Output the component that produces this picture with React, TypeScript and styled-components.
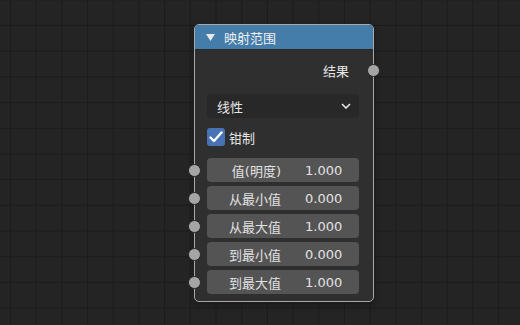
import React from "react";
import styled, { createGlobalStyle } from "styled-components";

const GlobalStyle = createGlobalStyle`
    html, body {
        margin: 0;
        padding: 0;
        background: #232323;
    }
    * {
        box-sizing: border-box;
    }
`

const Canvas = styled.div`
    position: relative;
    width: 520px;
    height: 325px;
    overflow: hidden;
    background-color: #242424;
    background-image:
        linear-gradient(to right, #1b1b1b 1px, transparent 1px),
        linear-gradient(to bottom, #1b1b1b 1px, transparent 1px);
    background-size: 25.7px 25.7px;
    background-position: 10px -0.7px;
    font-family: "DejaVu Sans", "Noto Sans CJK SC", sans-serif;
    font-size: 13px;
    color: #e6e6e6;
`

const Node = styled.div`
    position: absolute;
    left: 194px;
    top: 24px;
    width: 180px;
    border: 1px solid #a9a9a9;
    border-radius: 5px;
    background: rgba(48, 48, 48, 0.96);
    box-shadow: 0 2px 6px rgba(0, 0, 0, 0.35);
`

const Header = styled.div`
    height: 25px;
    display: flex;
    align-items: center;
    gap: 9px;
    padding-left: 11px;
    background: #447caa;
    border-radius: 4px 4px 0 0;
    border-bottom: 1px solid #262626;
    color: #f0f0f0;
`

const Body = styled.div`
    display: flex;
    flex-direction: column;
    padding: 8px 14px 7px 12px;
`

const Row = styled.div`
    position: relative;
    height: 24px;
    display: flex;
    align-items: center;
`

const OutputRow = styled(Row)`
    justify-content: flex-end;
    padding-right: 10px;
    margin-bottom: 12px;
`

const Dropdown = styled.div`
    height: 24px;
    display: flex;
    align-items: center;
    justify-content: space-between;
    padding: 0 8px 0 10px;
    background: #282828;
    border-radius: 4px;
    margin-bottom: 10px;
`

const CheckRow = styled.div`
    height: 18px;
    display: flex;
    align-items: center;
    gap: 4px;
    margin-bottom: 12px;
`

const CheckBox = styled.div`
    width: 18px;
    height: 18px;
    border-radius: 3px;
    background: #4772b3;
    display: flex;
    align-items: center;
    justify-content: center;
`

const Fields = styled.div`
    display: flex;
    flex-direction: column;
    gap: 4px;
`

const Field = styled.div`
    flex: 1;
    height: 24px;
    display: flex;
    align-items: center;
    background: #545454;
    border-radius: 4px;
    color: #e2e2e2;
`

const FieldLabel = styled.span`
    width: 74px;
    text-align: right;
`

const FieldValue = styled.span`
    margin-left: 24px;
`

const Socket = styled.span<{ $side: "left" | "right" }>`
    position: absolute;
    top: 50%;
    ${({ $side }) => ($side === "left" ? "left: -19px;" : "right: -21px;")}
    width: 13px;
    height: 13px;
    margin-top: -6.5px;
    border-radius: 50%;
    background: #a5a5a5;
    border: 1px solid #262626;
`

const inputs = [
    { label: "值(明度)", value: "1.000" },
    { label: "从最小值", value: "0.000" },
    { label: "从最大值", value: "1.000" },
    { label: "到最小值", value: "0.000" },
    { label: "到最大值", value: "1.000" },
]

const App = (): JSX.Element => {
    return (
        <>
            <GlobalStyle />
            <Canvas>
                <Node>
                    <Header>
                        <svg width="9" height="7" viewBox="0 0 9 7">
                            <path d="M0 0 L9 0 L4.5 7 Z" fill="#e8e8e8" />
                        </svg>
                        <span>映射范围</span>
                    </Header>
                    <Body>
                        <OutputRow>
                            结果
                            <Socket $side="right" />
                        </OutputRow>
                        <Dropdown>
                            <span>线性</span>
                            <svg width="10" height="6" viewBox="0 0 10 6">
                                <path d="M1 1 L5 5 L9 1" stroke="#e8e8e8" strokeWidth="1.6" fill="none" />
                            </svg>
                        </Dropdown>
                        <CheckRow>
                            <CheckBox>
                                <svg width="14" height="12" viewBox="0 0 14 12">
                                    <path d="M1.5 6.5 L5 10 L12.5 1.5" stroke="#ffffff" strokeWidth="2.4" fill="none" strokeLinecap="round" strokeLinejoin="round" />
                                </svg>
                            </CheckBox>
                            <span>钳制</span>
                        </CheckRow>
                        <Fields>
                            {inputs.map((item) => (
                                <Row key={item.label}>
                                    <Socket $side="left" />
                                    <Field>
                                        <FieldLabel>{item.label}</FieldLabel>
                                        <FieldValue>{item.value}</FieldValue>
                                    </Field>
                                </Row>
                            ))}
                        </Fields>
                    </Body>
                </Node>
            </Canvas>
        </>
    )
};

export default App;
